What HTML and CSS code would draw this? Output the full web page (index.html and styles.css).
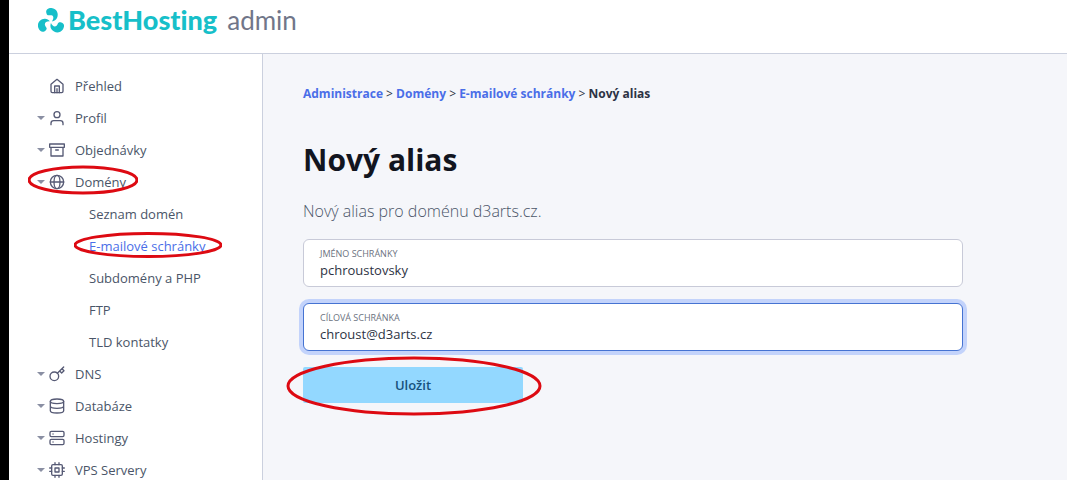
FILE: index.html
```
<!DOCTYPE html>
<html lang="cs">
<head>
  <meta charset="UTF-8">
  <meta name="viewport" content="width=device-width, initial-scale=1.0">
  <title>Nový alias</title>
  <link rel="stylesheet" href="styles.css">
</head>
<body>
  <header class="header">
    <a class="logo" href="#">
      <svg class="logo-mark" viewBox="0 0 26 26">
        <g id="blade">
          <path d="M8.500 6.500 C7 2 11 .8 13.500 1 C19 1.500 21 7 19 11 C18 13 16.500 14 14 14.500 C16 11.500 15.800 9 13.500 8.300 C11.500 7.600 9.500 9.500 8.500 6.500Z"/>
        </g>
        <use href="#blade" transform="rotate(120 13 15)"/>
        <use href="#blade" transform="rotate(240 13 15)"/>
      </svg>
      <span class="logo-name">BestHosting</span>
      <span class="logo-sub">admin</span>
    </a>
  </header>

  <div class="layout">
    <nav class="sidebar">
      <ul class="menu">
        <li class="menu-item">
          <a href="#"><span class="caret hidden"></span>
            <svg class="icon" viewBox="0 0 24 24"><path d="M3 9.500 12 2l9 7.500V20a2 2 0 0 1-2 2H5a2 2 0 0 1-2-2z"/><path d="M8.500 22V12h7v10M12 16v6"/></svg>
            Přehled</a>
        </li>
        <li class="menu-item">
          <a href="#"><span class="caret"></span>
            <svg class="icon" viewBox="0 0 24 24"><circle cx="12" cy="7" r="4.500"/><path d="M3 22v-2a4 4 0 0 1 4-4h10a4 4 0 0 1 4 4v2"/></svg>
            Profil</a>
        </li>
        <li class="menu-item">
          <a href="#"><span class="caret"></span>
            <svg class="icon" viewBox="0 0 24 24"><path d="M1 3h22v5H1zM3 8v13h18V8M10 12h4"/></svg>
            Objednávky</a>
        </li>
        <li class="menu-item">
          <a href="#"><span class="caret"></span>
            <svg class="icon" viewBox="0 0 24 24"><circle cx="12" cy="12" r="10"/><ellipse cx="12" cy="12" rx="4.500" ry="10"/><path d="M2 12h20"/></svg>
            Domény</a>
          <svg class="mark mark-domains" viewBox="0 0 110 30"><ellipse cx="55" cy="15" rx="54" ry="13"/></svg>
        </li>
        <li class="menu-item sub"><a href="#">Seznam domén</a></li>
        <li class="menu-item sub active">
          <a href="#">E-mailové schránky</a>
          <svg class="mark mark-mailboxes" viewBox="0 0 148 26"><ellipse cx="74" cy="13" rx="73" ry="11.500"/></svg>
        </li>
        <li class="menu-item sub"><a href="#">Subdomény a PHP</a></li>
        <li class="menu-item sub"><a href="#">FTP</a></li>
        <li class="menu-item sub"><a href="#">TLD kontatky</a></li>
        <li class="menu-item">
          <a href="#"><span class="caret"></span>
            <svg class="icon" viewBox="0 0 24 24"><circle cx="8" cy="15.500" r="6.500"/><path d="M12.500 11 22 1.500M16 7.500l3 3 3.500-3.500-3-3"/></svg>
            DNS</a>
        </li>
        <li class="menu-item">
          <a href="#"><span class="caret"></span>
            <svg class="icon" viewBox="0 0 24 24"><ellipse cx="12" cy="5" rx="10" ry="3.500"/><path d="M2 5v14c0 2 4.500 3.500 10 3.500s10-1.500 10-3.500V5M2 12c0 2 4.500 3.500 10 3.500s10-1.500 10-3.500"/></svg>
            Databáze</a>
        </li>
        <li class="menu-item">
          <a href="#"><span class="caret"></span>
            <svg class="icon" viewBox="0 0 24 24"><rect x="1.500" y="2" width="21" height="8" rx="2"/><rect x="1.500" y="14" width="21" height="8" rx="2"/><path d="M6 6h.1M6 18h.1"/></svg>
            Hostingy</a>
        </li>
        <li class="menu-item">
          <a href="#"><span class="caret"></span>
            <svg class="icon" viewBox="0 0 24 24"><rect x="4" y="4" width="16" height="16" rx="2"/><path d="M9 9h6v6H9zM9 1v3M15 1v3M9 20v3M15 20v3M20 9h3M20 14h3M1 9h3M1 14h3"/></svg>
            VPS Servery</a>
        </li>
      </ul>
    </nav>

    <main class="content">
      <div class="breadcrumb">
        <a href="#">Administrace</a> &gt; <a href="#">Domény</a> &gt; <a href="#">E-mailové schránky</a> &gt; <strong>Nový alias</strong>
      </div>
      <h1>Nový alias</h1>
      <p class="lead">Nový alias pro doménu d3arts.cz.</p>
      <form class="form">
        <div class="field">
          <label for="name">Jméno schránky</label>
          <input type="text" id="name" value="pchroustovsky">
        </div>
        <div class="field focused">
          <label for="target">Cílová schránka</label>
          <input type="text" id="target" value="chroust@d3arts.cz">
        </div>
        <div class="actions">
          <button type="button" class="button">Uložit</button>
          <svg class="mark mark-save" viewBox="0 0 256 60"><ellipse cx="128" cy="30" rx="126" ry="28"/></svg>
        </div>
      </form>
    </main>
  </div>
</body>
</html>
```

FILE: styles.css
```
* {
  box-sizing: border-box;
}
body {
  display: flex;
  flex-direction: column;
  height: 100vh;
  margin: 0;
  overflow: hidden;
  border-left: 9px solid #000;
  background-color: #fff;
  font-family: "Open Sans", "Noto Sans", sans-serif;
  font-size: 13px;
  line-height: 20px;
  color: #2d3344;
}
a {
  color: inherit;
  text-decoration: none;
}
.header {
  flex: none;
  height: 54px;
  padding: 4px 29px;
  border-bottom: 1px solid #cbd0de;
}
.logo {
  display: flex;
  align-items: center;
  font-family: Lato, sans-serif;
  line-height: 32px;
  font-variant-ligatures: none;
}
.logo-mark {
  width: 26px;
  height: 26px;
  margin-right: 4px;
  fill: #17bfc9;
}
.logo-name {
  margin-right: 10px;
  font-size: 27px;
  font-weight: 900;
  color: #17bfc9;
}
.logo-sub {
  font-size: 26px;
  color: #717689;
}
.layout {
  display: flex;
  flex: 1;
  min-height: 0;
}
.sidebar {
  flex: none;
  width: 254px;
  overflow: hidden;
  border-right: 1px solid #cbd0de;
}
.menu {
  margin: 0;
  padding: 16px 0 16px 28px;
  list-style: none;
}
.menu-item {
  position: relative;
  color: #4a5568;
}
.menu-item a {
  display: flex;
  align-items: center;
  height: 32px;
}
.menu-item.sub a {
  padding-left: 52px;
}
.menu-item.active {
  color: #4a6ee8;
}
.caret {
  width: 8px;
  margin-right: 4px;
  border: 4px solid transparent;
  border-top-color: #8a8fa3;
  border-bottom: 0;
}
.caret.hidden {
  visibility: hidden;
}
.icon {
  width: 16px;
  height: 16px;
  margin-right: 10px;
  fill: none;
  stroke: #565a75;
  stroke-width: 2;
  stroke-linecap: round;
  stroke-linejoin: round;
}
.content {
  flex: 1;
  padding: 30px 40px;
  background-color: #f5f6fa;
}
.breadcrumb {
  font-size: 12px;
}
.breadcrumb a {
  font-weight: 700;
  color: #4a6ee8;
}
.breadcrumb strong {
  font-weight: 700;
}
h1 {
  margin: 36px 0 20px;
  font-size: 30px;
  line-height: 40px;
  color: #12151f;
}
.lead {
  margin: 0 0 17px;
  font-size: 16px;
  font-weight: 300;
  line-height: 22px;
  color: #4a5568;
}
.form {
  display: flex;
  flex-direction: column;
  gap: 16px;
  max-width: 660px;
}
.field {
  display: flex;
  flex-direction: column;
  height: 48px;
  padding: 8px 16px;
  border: 1px solid #c8cad8;
  border-radius: 6px;
  background-color: #fff;
}
.field.focused {
  border-color: #4573d2;
  box-shadow: 0 0 0 4px #c3d3fb;
}
.field label {
  font-size: 9px;
  line-height: 12px;
  text-transform: uppercase;
  color: #6b7280;
}
.field input {
  width: 100%;
  padding: 0;
  border: 0;
  outline: 0;
  background: none;
  font: inherit;
  color: inherit;
}
.actions {
  position: relative;
}
.button {
  width: 220px;
  height: 36px;
  border: 0;
  border-radius: 2px;
  background-color: #93d8ff;
  font: inherit;
  font-weight: 600;
  color: #17527c;
  cursor: pointer;
}
/* red highlight rings, drawn over the controls */
.mark {
  position: absolute;
  fill: none;
  stroke: #dd0a12;
  stroke-width: 3;
  pointer-events: none;
}
.mark-domains {
  top: -1px;
  left: -9px;
  width: 110px;
  height: 30px;
}
.mark-mailboxes {
  top: 2px;
  left: 37px;
  width: 148px;
  height: 26px;
}
.mark-save {
  top: -11px;
  left: -17px;
  width: 256px;
  height: 60px;
}
```
